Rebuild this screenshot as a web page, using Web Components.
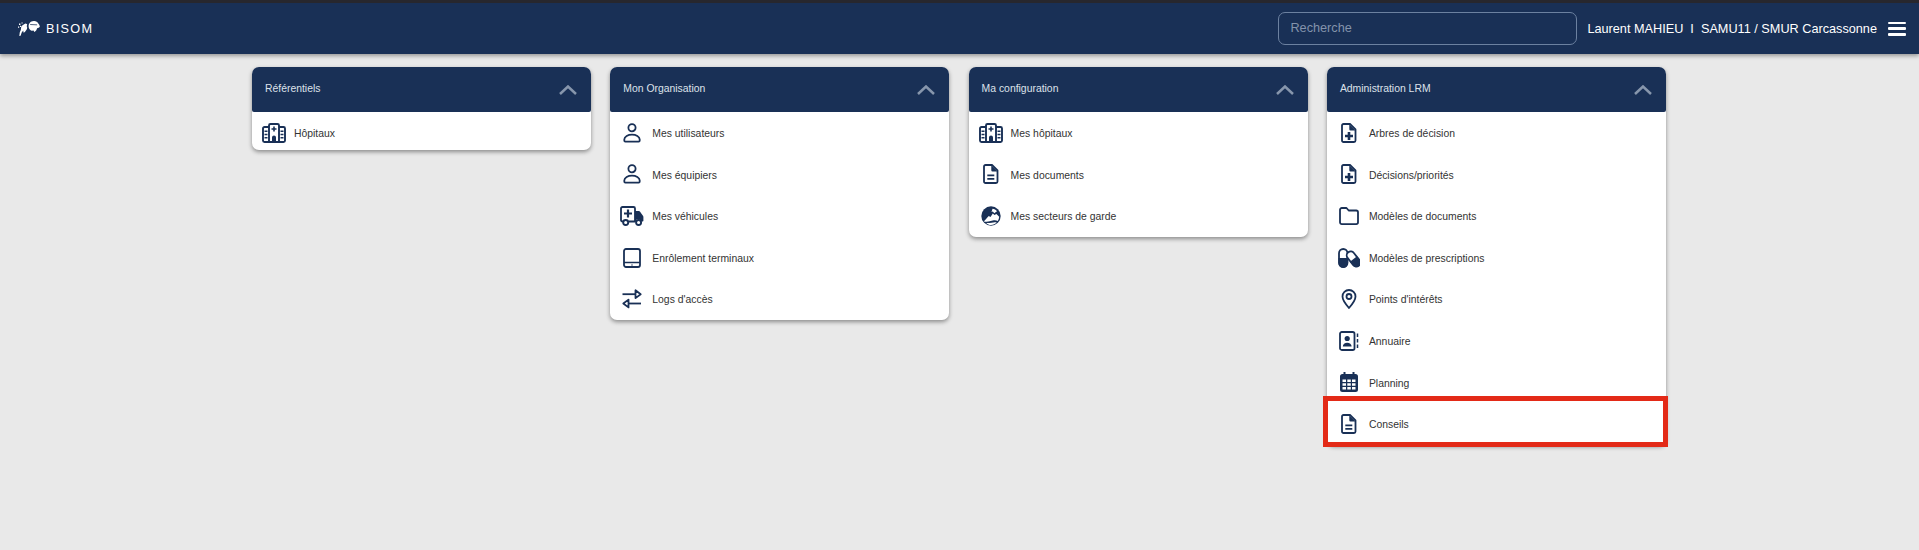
<!DOCTYPE html>
<html lang="fr">
<head>
<meta charset="utf-8">
<title>BISOM</title>
<style>
  html, body { margin: 0; padding: 0; }
  body { background: #e9e9e9; font-family: "Liberation Sans", Arial, sans-serif; height: 550px; overflow: hidden; }
</style>
</head>
<body>
<bisom-navbar user="Laurent MAHIEU" org="SAMU11 / SMUR Carcassonne"></bisom-navbar>
<menu-grid>
  <menu-card title="Référentiels">
    <menu-item icon="hospital" short>Hôpitaux</menu-item>
  </menu-card>
  <menu-card title="Mon Organisation">
    <menu-item icon="person">Mes utilisateurs</menu-item>
    <menu-item icon="person">Mes équipiers</menu-item>
    <menu-item icon="truck">Mes véhicules</menu-item>
    <menu-item icon="tablet">Enrôlement terminaux</menu-item>
    <menu-item icon="arrows">Logs d'accès</menu-item>
  </menu-card>
  <menu-card title="Ma configuration">
    <menu-item icon="hospital">Mes hôpitaux</menu-item>
    <menu-item icon="doc">Mes documents</menu-item>
    <menu-item icon="globe">Mes secteurs de garde</menu-item>
  </menu-card>
  <menu-card title="Administration LRM">
    <menu-item icon="docplus">Arbres de décision</menu-item>
    <menu-item icon="docplus">Décisions/priorités</menu-item>
    <menu-item icon="folder">Modèles de documents</menu-item>
    <menu-item icon="pills">Modèles de prescriptions</menu-item>
    <menu-item icon="pin">Points d'intérêts</menu-item>
    <menu-item icon="contact">Annuaire</menu-item>
    <menu-item icon="calendar">Planning</menu-item>
    <menu-item icon="doc" marked>Conseils</menu-item>
  </menu-card>
</menu-grid>

<script>
const navy = '#193056';

// w, h = drawn size in px, body = svg content (viewBox is 0 0 w h)
const icons = {
  hospital: { w: 24, h: 20, body: `
    <g fill="none" stroke="${navy}" stroke-width="1.900" stroke-linejoin="round">
      <path d="M7 4H2.500A1.500 1.500 0 0 0 1 5.500v12A1.500 1.500 0 0 0 2.500 19h19a1.500 1.500 0 0 0 1.500-1.500v-12A1.500 1.500 0 0 0 21.500 4H17"/>
      <path d="M7 19V2.500A1.500 1.500 0 0 1 8.500 1h7A1.500 1.500 0 0 1 17 2.500V19"/>
    </g>
    <path fill="${navy}" d="M11.200 3.500h1.600v1.700h1.700v1.600h-1.700v1.700h-1.600V6.800H9.500V5.200h1.700zM10 19v-4.500a2 2 0 0 1 4 0V19zM2.500 7.500h3v1.400h-3zM2.500 10.800h3v1.400h-3zM2.500 14.100h3v1.400h-3zM18.500 7.500h3v1.400h-3zM18.500 10.800h3v1.400h-3zM18.500 14.100h3v1.400h-3z"/>` },
  person: { w: 18, h: 20, body: `
    <g fill="none" stroke="${navy}" stroke-width="1.800">
      <circle cx="9" cy="4.700" r="3.600"/>
      <path stroke-linejoin="round" d="M1.300 16.500C1.300 13.500 5 11.700 9 11.700s7.700 1.800 7.700 4.800v1.100a1 1 0 0 1-1 1H2.300a1 1 0 0 1-1-1z"/>
    </g>` },
  truck: { w: 24, h: 20, body: `
    <path fill="none" stroke="${navy}" stroke-width="1.800" stroke-linejoin="round" d="M3 15.500H2.500A1.500 1.500 0 0 1 1 14V2.500A1.500 1.500 0 0 1 2.500 1h11A1.500 1.500 0 0 1 15 2.500v13H8.500"/>
    <path fill="${navy}" d="M6.900 3.500h2.200v2.900H12v2.200H9.100v2.900H6.900V8.600H4V6.400h2.900zM15 5h3.800c.6 0 1 .3 1.300.7l3 4.300c.2.300.3.600.3 1v3.500c0 .6-.4 1-1 1h-1.500a3 3 0 0 0-5.800 0H15z"/>
    <g fill="#fff" stroke="${navy}" stroke-width="1.900"><circle cx="5.700" cy="16.500" r="2.500"/><circle cx="18.600" cy="16.500" r="2.500"/></g>` },
  tablet: { w: 18, h: 20, body: `
    <rect x="1" y="1" width="16" height="18" rx="2" fill="none" stroke="${navy}" stroke-width="1.800"/>
    <path stroke="${navy}" stroke-width="1.500" d="M1 14.500h16"/>
    <rect x="8.400" y="16.400" width="1.200" height="1.200" fill="${navy}"/>` },
  arrows: { w: 20, h: 20, body: `
    <g fill="none" stroke="${navy}" stroke-width="1.800" stroke-linejoin="round">
      <path d="M0.500 5.200H13"/><path d="M13.500 1.300v7.800l5.200-3.900z"/>
      <path d="M19 14.500H7"/><path d="M6.500 10.600v7.800l-5.200-3.900z"/>
    </g>` },
  doc: { w: 16, h: 20, body: `
    <path fill="none" stroke="${navy}" stroke-width="1.800" stroke-linejoin="round" d="M2.500 1H9l5.500 5.500V17.500a1.500 1.500 0 0 1-1.500 1.500H2.500A1.500 1.500 0 0 1 1 17.500v-15A1.500 1.500 0 0 1 2.500 1z"/>
    <path fill="${navy}" d="M8.300 1.500l6 6H9.500a1.200 1.200 0 0 1-1.200-1.200zM4.300 10.500h7v1.700h-7zM4.300 14h7v1.700h-7z"/>` },
  docplus: { w: 16, h: 20, body: `
    <path fill="none" stroke="${navy}" stroke-width="1.800" stroke-linejoin="round" d="M2.500 1H9l5.500 5.500V17.500a1.500 1.500 0 0 1-1.500 1.500H2.500A1.500 1.500 0 0 1 1 17.500v-15A1.500 1.500 0 0 1 2.500 1z"/>
    <path fill="${navy}" d="M6.700 9h2.600v2.700H12v2.600H9.300V17H6.700v-2.700H4v-2.600h2.700zM8.300 1.500l6 6H9.500a1.200 1.200 0 0 1-1.200-1.200z"/>` },
  globe: { w: 20, h: 20, body: `
    <circle cx="10" cy="10" r="9.700" fill="${navy}"/>
    <path fill="#fff" d="M2.800 15.400l4.900-5.300 1.800 1 2.300-3.600 1.700 1.600 1.900-1.100 2.800 2.700c-.1 1.500-.6 3-1.400 4.200-1.900-1-3.500-.9-5.100-.4-2.800.9-5.800 1.600-8.900.9zM11.500 2.800c1.800.3 3.400 1.200 4.500 2.400l-2.800 2-1.300-1.600-1.400.5z"/>
    <path fill="#fff" d="M5.300 16.900c2.800.5 6.200-.4 8.400-.7.900 0 1.500.1 2 .3-1.500 1.600-3.500 2.500-5.700 2.500-1.800 0-3.400-.7-4.700-2.100z"/>` },
  folder: { w: 20, h: 18, body: `
    <path fill="none" stroke="${navy}" stroke-width="1.800" stroke-linejoin="round" d="M1 2.800A1.800 1.800 0 0 1 2.800 1h4.700l2.200 2.500h7.500A1.800 1.800 0 0 1 19 5.300v10a1.800 1.800 0 0 1-1.800 1.800H2.800A1.800 1.800 0 0 1 1 15.300z"/>` },
  pills: { w: 22, h: 20, body: `
    <rect x="1" y="1" width="8.500" height="18" rx="4.250" fill="#fff" stroke="${navy}" stroke-width="1.800"/>
    <path fill="${navy}" d="M0.500 10h9.500v5a4.750 4.750 0 0 1-9.500 0z"/>
    <g transform="rotate(-38 15.500 11)">
      <rect x="11.500" y="2.500" width="8" height="17" rx="4" fill="#fff" stroke="${navy}" stroke-width="1.800"/>
      <path fill="${navy}" d="M11 11h9v4.500a4.500 4.500 0 0 1-9 0z"/>
    </g>` },
  pin: { w: 16, h: 20, body: `
    <g fill="none" stroke="${navy}" stroke-width="1.800">
      <path stroke-linejoin="round" d="M8 19C4.500 15 1.500 11.500 1.500 7.500a6.500 6.500 0 0 1 13 0C14.500 11.500 11.500 15 8 19z"/>
      <circle cx="8" cy="7.500" r="2.500"/>
    </g>` },
  contact: { w: 20, h: 20, body: `
    <rect x="1" y="1" width="14.500" height="18" rx="1.800" fill="none" stroke="${navy}" stroke-width="1.800"/>
    <circle cx="8.200" cy="7.500" r="2.600" fill="${navy}"/>
    <path fill="${navy}" d="M3.800 15.500c0-2.300 2-3.700 4.400-3.700s4.400 1.400 4.400 3.700z"/>
    <path stroke="${navy}" stroke-width="1.500" d="M18.500 2.500v3.500M18.500 8v3.500M18.500 13.500V17"/>` },
  calendar: { w: 18, h: 20, body: `
    <path fill="${navy}" d="M3.500 0h2v2h7V0h2v2h1A2.500 2.500 0 0 1 18 4.500v13a2.500 2.500 0 0 1-2.500 2.500h-13A2.500 2.500 0 0 1 0 17.500v-13A2.500 2.500 0 0 1 2.500 2h1z"/>
    <path fill="#fff" d="M2.500 7.500h3.500v2.500H2.500zM7.300 7.500h3.500v2.500H7.300zM12 7.500h3.500v2.500H12zM2.500 11.200h3.500v2.500H2.500zM7.300 11.200h3.500v2.500H7.300zM12 11.200h3.500v2.500H12zM2.500 15h3.500v2.500H2.500zM7.300 15h3.500v2.500H7.300zM12 15h3.500v2.500H12z"/>` },
};

const navbarTemplate = document.createElement('template');
navbarTemplate.innerHTML = `
  <style>
    :host {
      display: flex;
      align-items: center;
      height: 51px;
      border-top: 3px solid #27272e;
      background: ${navy};
      box-shadow: 0 2px 4px rgba(0, 0, 0, 0.35);
      color: #fff;
      font-family: "Liberation Sans", Arial, sans-serif;
      position: relative;
    }
    .brand {
      display: flex;
      align-items: center;
      gap: 6px;
      margin-left: 18px;
      font-size: 12.700px;
      letter-spacing: 1.270px;
    }
    .brand svg { display: block; }
    input {
      box-sizing: border-box;
      width: 299px;
      height: 33px;
      margin-left: auto;
      padding: 0 11px 2px;
      border: 1px solid #6c81a0;
      border-radius: 7px;
      background: transparent;
      color: #fff;
      font: 12.700px "Liberation Sans", Arial, sans-serif;
      outline: none;
    }
    input::placeholder { color: #8393ab; opacity: 1; }
    .user {
      margin-left: 10px;
      font-size: 12.700px;
      white-space: pre;
    }
    .burger {
      display: flex;
      flex-direction: column;
      justify-content: space-between;
      width: 18px;
      height: 14px;
      margin: 0 13px 0 11px;
    }
    .burger span { height: 2.500px; background: #fff; border-radius: 1px; }
  </style>
  <div class="brand">
    <svg width="22" height="15" viewBox="0 0 22 15">
      <path fill="#fff" d="M10.800 3.400C11.600 1.200 13.900 0 16.200.1c1.900.1 3.500 1 4.100 2.500.7.800 1.300 1.800 1.600 2.900-.6 1-1.700 1.500-2.800 1.700-.3 1.500-1.300 3-2.700 3.800l-.9-1.400c-1.400.4-2.800 0-3.700-1.200-1.100-1.400-1.500-3.200-1-5z"/>
      <path fill="${navy}" d="M12.200 3.300l6.900.2v.7l-7-.1z"/>
      <path fill="#fff" d="M3.300 5.600C4.500 4 6.100 2.800 7.700 2.400l1.500.9-.5 1.900c.7 1.100.6 2.500-.2 3.600L6.900 11l-1.300.8-.4-2.400-1.500 2-1.100 3.400-1.300.2.500-3.800 1-2.300z"/>
      <path fill="#fff" d="M1 2.500h1.400v1.400H1zM3.500 1.500h1.100v1.100H3.500zM0 5.500h1.200v1.200H0zM2 4.800h1.100v1.100H2z"/>
    </svg>
    <span>BISOM</span>
  </div>
  <input type="text" placeholder="Recherche">
  <div class="user"></div>
  <div class="burger"><span></span><span></span><span></span></div>
`;

class BisomNavbar extends HTMLElement {
  constructor() {
    super();
    this.attachShadow({ mode: 'open' });
    this.shadowRoot.appendChild(navbarTemplate.content.cloneNode(true));
  }

  connectedCallback() {
    const user = this.getAttribute('user');
    const org = this.getAttribute('org');
    this.shadowRoot.querySelector('.user').textContent = `${user}  I  ${org}`;
  }
}

const gridTemplate = document.createElement('template');
gridTemplate.innerHTML = `
  <style>
    :host {
      display: grid;
      grid-template-columns: repeat(4, 339px);
      column-gap: 19.300px;
      align-items: start;
      width: 1414px;
      margin: 13px 0 0 252px;
    }
  </style>
  <slot></slot>
`;

class MenuGrid extends HTMLElement {
  constructor() {
    super();
    this.attachShadow({ mode: 'open' });
    this.shadowRoot.appendChild(gridTemplate.content.cloneNode(true));
  }
}

const cardTemplate = document.createElement('template');
cardTemplate.innerHTML = `
  <style>
    :host {
      display: block;
      background: #fff;
      border-radius: 7px;
      box-shadow: 0 2px 4px rgba(0, 0, 0, 0.4);
      font-family: "Liberation Sans", Arial, sans-serif;
    }
    header {
      display: flex;
      align-items: center;
      justify-content: space-between;
      height: 45px;
      padding: 0 14px 0 13px;
      background: ${navy};
      border-radius: 7px 7px 2px 2px;
      color: #dde2ea;
      font-size: 10.400px;
    }
    .title { position: relative; top: -1px; }
    svg { display: block; }
  </style>
  <header>
    <span class="title"></span>
    <svg width="18" height="10" viewBox="0 0 18 10">
      <path d="M1 9l8-7.500 8 7.500" fill="none" stroke="#8796ac" stroke-width="2.500"/>
    </svg>
  </header>
  <slot></slot>
`;

class MenuCard extends HTMLElement {
  constructor() {
    super();
    this.attachShadow({ mode: 'open' });
    this.shadowRoot.appendChild(cardTemplate.content.cloneNode(true));
  }

  connectedCallback() {
    this.shadowRoot.querySelector('.title').textContent = this.getAttribute('title');
    this.removeAttribute('title');
  }
}

const itemTemplate = document.createElement('template');
itemTemplate.innerHTML = `
  <style>
    :host {
      display: flex;
      align-items: center;
      gap: 8px;
      height: 41.600px;
      padding-left: 10px;
      color: #333;
      font-size: 10.400px;
      position: relative;
    }
    :host([short]) { height: 38px; align-items: flex-start; }
    :host([short]) .icon, :host([short]) .label { height: 41.600px; }
    .icon {
      display: flex;
      align-items: center;
      justify-content: center;
      width: 24px;
      flex: none;
    }
    .label { display: flex; align-items: center; padding-top: 1.400px; box-sizing: border-box; }
    svg { display: block; flex: none; }
    .mark {
      display: none;
      position: absolute;
      left: -4px;
      right: -2px;
      top: -7px;
      bottom: -2.500px;
      border: 5px solid #e32a17;
    }
    :host([marked]) .mark { display: block; }
  </style>
  <div class="icon"></div>
  <div class="label"><slot></slot></div>
  <div class="mark"></div>
`;

class MenuItem extends HTMLElement {
  constructor() {
    super();
    this.attachShadow({ mode: 'open' });
    this.shadowRoot.appendChild(itemTemplate.content.cloneNode(true));
  }

  connectedCallback() {
    const icon = icons[this.getAttribute('icon')];
    this.shadowRoot.querySelector('.icon').innerHTML =
      `<svg width="${icon.w}" height="${icon.h}" viewBox="0 0 ${icon.w} ${icon.h}">${icon.body}</svg>`;
  }
}

customElements.define('bisom-navbar', BisomNavbar);
customElements.define('menu-grid', MenuGrid);
customElements.define('menu-card', MenuCard);
customElements.define('menu-item', MenuItem);
</script>
</body>
</html>
